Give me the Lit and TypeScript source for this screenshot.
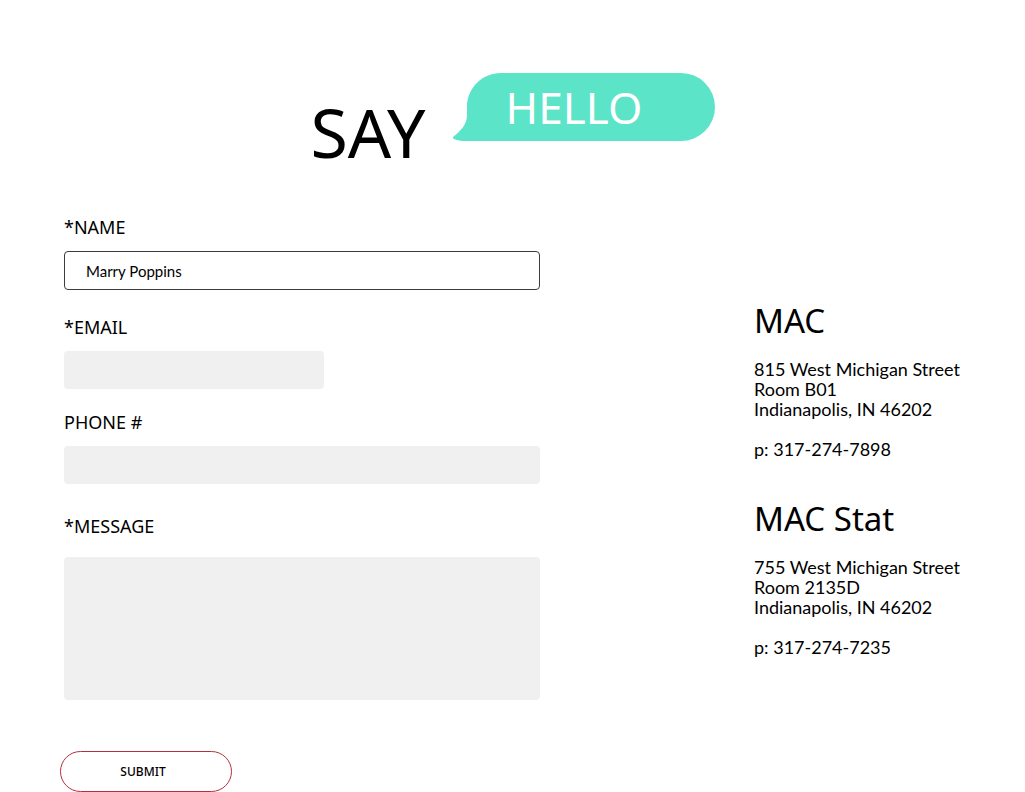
import { LitElement, html, css, svg } from "lit";
import { customElement } from "lit/decorators.js";

interface Office {
  name: string;
  lines: string[];
  phone: string;
}

const offices: Office[] = [
  {
    name: "MAC",
    lines: ["815 West Michigan Street", "Room B01", "Indianapolis, IN 46202"],
    phone: "317-274-7898",
  },
  {
    name: "MAC Stat",
    lines: ["755 West Michigan Street", "Room 2135D", "Indianapolis, IN 46202"],
    phone: "317-274-7235",
  },
];

const bubbleShape = svg`<path fill="#5ce4c8" d="M49 0H229a34 34 0 0 1 0 68H14C9 68 5 67.500 2 66C.5 65.200.6 64.200 2 63.300C8 58 15 52 15 42V34C15 15 30 0 49 0Z"/>`;

@customElement("app-root")
export class AppRoot extends LitElement {
  static styles = css`
    :host {
      display: block;
      color: #000;
      background: #fff;
      font-family: "Noto Sans", "Open Sans", sans-serif;
    }
    * {
      box-sizing: border-box;
    }
    .title {
      display: flex;
      justify-content: center;
      align-items: flex-start;
      gap: 26px;
      margin: 0;
      padding: 73px 0 49px;
      font-weight: 400;
    }
    .say {
      margin-top: 25px;
      font-size: 68px;
      line-height: 68px;
    }
    .bubble {
      position: relative;
      z-index: 0;
      width: 263px;
      padding-left: 54px;
      color: #fff;
      font-size: 44px;
      line-height: 68px;
    }
    .bubble svg {
      position: absolute;
      inset: 0;
      z-index: -1;
    }
    .columns {
      display: grid;
      grid-template-columns: 476fr 211fr;
      column-gap: 214px;
      align-items: start;
      padding: 0 60px 0 64px;
    }
    .form {
      display: flex;
      flex-direction: column;
      align-items: flex-start;
    }
    .label {
      margin-bottom: 12px;
      font-size: 18px;
      line-height: 24px;
    }
    .field {
      display: block;
      width: 100%;
      height: 38px;
      margin: 0 0 21px;
      padding: 0 21px;
      border: 0;
      border-radius: 4px;
      outline: none;
      background: #f0f0f0;
      color: #000;
      font-family: Lato, sans-serif;
      font-size: 15px;
    }
    .active {
      height: 39px;
      margin-bottom: 25px;
      border: 1px solid #3c3c3c;
      background: #fff;
    }
    .short {
      max-width: 260px;
    }
    .last {
      margin-bottom: 30px;
    }
    .message-label {
      margin-bottom: 19px;
    }
    .message {
      height: 143px;
      margin-bottom: 51px;
      padding: 12px 21px;
      resize: none;
    }
    .submit {
      width: 172px;
      height: 41px;
      margin-left: -4px;
      padding: 0 6px 0 0;
      border: 1px solid #b5303f;
      border-radius: 21px;
      background: #fff;
      color: #000;
      font-family: inherit;
      font-size: 12px;
      font-weight: 500;
    }
    .offices {
      display: flex;
      flex-direction: column;
      gap: 37px;
      padding-top: 83px;
    }
    .office-name {
      margin: 0 0 15px;
      font-size: 33px;
      font-weight: 400;
      line-height: 46px;
    }
    .address {
      font-family: Lato, sans-serif;
      font-size: 18px;
      font-style: normal;
      line-height: 20px;
      white-space: nowrap;
    }
    .phone {
      margin-top: 20px;
    }
  `;

  render() {
    return html`
      <main>
        <h1 class="title">
          <span class="say">SAY</span>
          <span class="bubble">
            <svg width="263" height="68" viewBox="0 0 263 68" aria-hidden="true">${bubbleShape}</svg>HELLO
          </span>
        </h1>
        <div class="columns">
          <form class="form" @submit=${(e: Event) => e.preventDefault()}>
            <label class="label" for="name">*NAME</label>
            <input class="field active" id="name" type="text" value="Marry Poppins" required />
            <label class="label" for="email">*EMAIL</label>
            <input class="field short" id="email" type="email" required />
            <label class="label" for="phone">PHONE #</label>
            <input class="field last" id="phone" type="tel" />
            <label class="label message-label" for="message">*MESSAGE</label>
            <textarea class="field message" id="message" required></textarea>
            <button class="submit" type="submit">SUBMIT</button>
          </form>
          <div class="offices">
            ${offices.map(
              (o) => html`<section>
                <h2 class="office-name">${o.name}</h2>
                <address class="address">
                  ${o.lines.map((l) => html`<div>${l}</div>`)}
                  <div class="phone">p: ${o.phone}</div>
                </address>
              </section>`
            )}
          </div>
        </div>
      </main>
    `;
  }
}
